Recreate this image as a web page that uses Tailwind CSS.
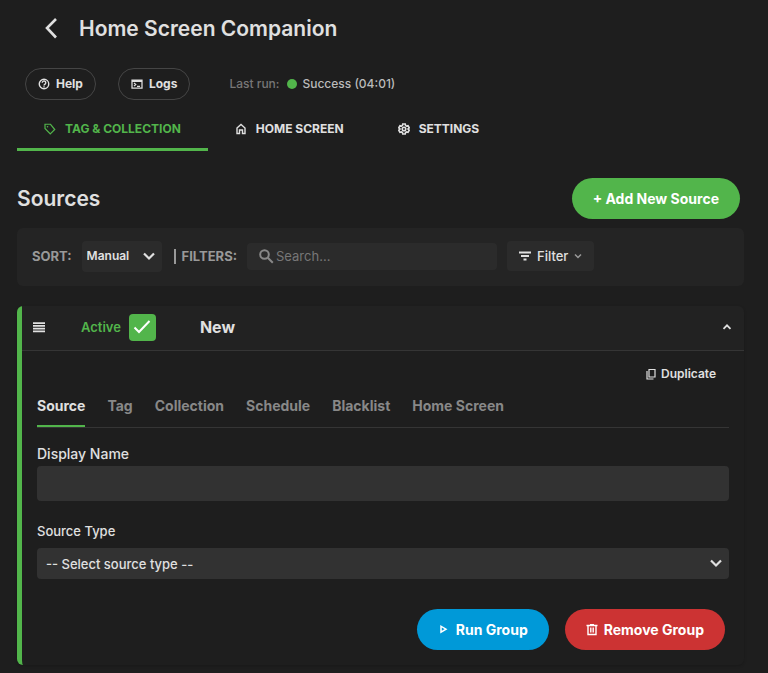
<!DOCTYPE html>
<html lang="en">
<head>
  <meta charset="UTF-8" />
  <meta name="viewport" content="width=device-width, initial-scale=1.0"/>
  <title>Home Screen Companion</title>
  <script src="https://cdn.jsdelivr.net/npm/@tailwindcss/browser@4"></script>
</head>
<body class="bg-[#1e1e1e] text-[#e0e0e0] font-['Inter',sans-serif] text-[13px] leading-5">
  <header class="flex items-center gap-[11px] h-14 pl-9 pt-0.5">
    <button type="button" aria-label="Back" class="size-8 flex items-center justify-center">
      <svg class="size-6" viewBox="0 0 24 24" fill="none" stroke="currentColor" stroke-width="2.6"><path d="M16 2 7 11l9 9.500"/></svg>
    </button>
    <h1 class="text-[21px] leading-8 font-semibold">Home Screen Companion</h1>
  </header>

  <main class="pl-[17px] pr-6">
    <!-- Toolbar -->
    <div class="flex items-center pt-3 pl-2">
      <button type="button" class="flex items-center gap-1.5 h-8 px-3 rounded-full border border-[#454545] text-[12px] font-bold">
        <svg class="size-3" viewBox="0 0 24 24" fill="none" stroke="currentColor" stroke-width="2.800"><circle cx="12" cy="12" r="9.500"/><path d="M8.500 9.500a3.500 3.500 0 1 1 5.500 2.800c-1.300.9-2 1.500-2 2.700"/><path d="M12 16.500v2.500"/></svg>
        Help
      </button>
      <button type="button" class="flex items-center gap-1.5 h-8 px-3 ml-[22px] rounded-full border border-[#454545] text-[12px] font-bold">
        <svg class="size-3" viewBox="0 0 24 24" fill="none" stroke="currentColor" stroke-width="2.500"><path d="M2 4h20v16H2z"/><path d="M2 6h20" stroke-width="4"/><path d="m6 10 3.500 3L6 16M12 16.500h6"/></svg>
        Logs
      </button>
      <p class="flex items-center ml-[39px] text-[12px] font-medium text-[#777]">Last run:
        <span class="size-2.5 rounded-full bg-[#52b54b] ml-2 mr-[5px]"></span>
        <span class="text-[#bbb]">Success (04:01)</span>
      </p>
    </div>

    <nav class="flex mt-[7px] text-[12px] font-bold uppercase">
      <a href="#tags" class="flex items-center gap-[9px] h-11 px-[27px] pt-0.5 border-b-3 border-[#52b54b] text-[#52b54b]">
        <svg class="size-3" viewBox="0 0 24 24" fill="none" stroke="currentColor" stroke-width="2.400"><path d="M2 2.500v8.500l10.500 11 9-9L13 2.500z"/><circle cx="7" cy="7.500" r="1.600" fill="currentColor" stroke="none"/></svg>
        Tag &amp; Collection
      </a>
      <a href="#home" class="flex items-center gap-[9px] h-11 px-[27px] pt-0.5 border-b-3 border-transparent">
        <svg class="size-3" viewBox="0 0 24 24" fill="none" stroke="currentColor" stroke-width="2.800"><path d="M4 10 12 3l8 7v11h-5v-7H9v7H4z"/></svg>
        Home Screen
      </a>
      <a href="#settings" class="flex items-center gap-[9px] h-11 px-[27px] pt-0.5 border-b-3 border-transparent">
        <svg class="size-3" viewBox="0 0 24 24" fill="none" stroke="currentColor" stroke-width="3.200"><path d="M9.500 2h5l.7 3.200 1.800 1 3.100-1 2.400 4.300L20 11.800v.6l2.500 2.100-2.400 4.300-3.100-1-1.800 1-.7 3.200h-5l-.7-3.200-1.800-1-3.100 1-2.400-4.300L4 12.400v-.6L1.500 9.500l2.400-4.300 3.100 1 1.800-1z"/><circle cx="12" cy="12" r="3.500"/></svg>
        Settings
      </a>
    </nav>

    <div class="flex items-center justify-between mt-[27px] pr-1">
      <h2 class="text-[21px] leading-8 font-semibold">Sources</h2>
      <button type="button" class="h-[41px] px-[21px] rounded-full bg-[#52b54b] text-white text-[14px] font-bold">+ Add New Source</button>
    </div>

    <!-- Sort and filters -->
    <div class="flex items-center h-[58px] mt-[9px] pl-[15px] pb-0.5 rounded-md bg-[#242424]">
      <label for="sort" class="font-bold text-[#999]">SORT:</label>
      <div class="relative ml-2.5">
        <select id="sort" class="appearance-none block w-20 h-[31px] pl-[5px] rounded bg-[#2b2b2b] text-[12px] font-semibold">
          <option>Manual</option>
          <option>Name</option>
        </select>
        <svg class="absolute right-1.5 top-2 size-3.5 pointer-events-none" viewBox="0 0 14 14" fill="none" stroke="currentColor" stroke-width="2.200"><path d="m2 4.500 5 5 5-5"/></svg>
      </div>
      <span class="w-0.5 h-[15px] ml-3 bg-[#999]"></span>
      <label for="search" class="ml-1.5 font-bold text-[#999]">FILTERS:</label>
      <div class="relative ml-2.5">
        <svg class="absolute left-3 top-1.5 size-[15px] text-[#888]" viewBox="0 0 15 15" fill="none" stroke="currentColor" stroke-width="2"><circle cx="5.500" cy="5.500" r="4.300"/><path d="m8.800 8.800 5 5"/></svg>
        <input id="search" type="text" placeholder="Search..." class="block w-[250px] h-[27px] pl-[29px] rounded bg-[#2b2b2b] text-[13px] placeholder:text-[#777]">
      </div>
      <button type="button" class="flex items-center gap-1.5 h-[30px] px-3 ml-2.5 rounded bg-[#2b2b2b] text-[13px] font-medium">
        <svg class="size-3" viewBox="0 0 12 12" fill="none" stroke="currentColor" stroke-width="1.800"><path d="M0 2.500h12M2 6h8M4.500 9.500h3"/></svg>
        Filter
        <svg class="size-2 text-[#999]" viewBox="0 0 8 8" fill="none" stroke="currentColor" stroke-width="1.500"><path d="m1 2.500 3 3 3-3"/></svg>
      </button>
    </div>

    <!-- Source group -->
    <section class="mt-5 mb-2 border-l-5 border-[#52b54b] rounded-md shadow-[0_1px_3px_rgba(0,0,0,0.2)]">
      <div class="flex items-center h-[45px] pl-[11px] pr-3 pb-0.5 rounded-tr-md bg-[#222] border-b border-[#353535]">
        <svg class="size-3" viewBox="0 0 12 12" fill="none" stroke="currentColor" stroke-width="1.800"><path d="M0 2.200h12M0 4.900h12M0 7.600h12M0 10.300h12"/></svg>
        <label for="active" class="ml-9 font-semibold text-[#52b54b]">Active</label>
        <div class="relative ml-2">
          <input id="active" type="checkbox" checked class="appearance-none block size-[27px] rounded bg-[#52b54b]">
          <svg class="absolute inset-0 size-[27px] text-white pointer-events-none" viewBox="0 0 27 27" fill="none" stroke="currentColor" stroke-width="2"><path d="m5.500 13.500 4.500 4.500L20.500 7"/></svg>
        </div>
        <h3 class="ml-11 text-[16px] font-bold">New</h3>
        <button type="button" aria-label="Collapse" class="ml-auto">
          <svg class="size-2.5" viewBox="0 0 10 10" fill="none" stroke="currentColor" stroke-width="1.800"><path d="m1.500 6.800 3.500-3.500 3.500 3.500"/></svg>
        </button>
      </div>

      <div class="px-[15px] pt-[13px] pb-[15px]">
        <div class="flex justify-end pr-[13px]">
          <button type="button" class="flex items-center gap-1 text-[12px] font-semibold">
            <svg class="size-3" viewBox="0 0 12 12" fill="none" stroke="currentColor" stroke-width="1.200"><path d="M4 1.500h6v7.500H4zM2 3v8h6.500"/></svg>
            Duplicate
          </button>
        </div>

        <nav class="flex gap-[22px] mt-[9px] border-b border-[#353535] text-[14px] font-bold text-[#888]">
          <a href="#source" class="h-[34px] pt-[3px] border-b-2 border-[#52b54b] text-[#e0e0e0]">Source</a>
          <a href="#tag" class="pt-[3px]">Tag</a>
          <a href="#collection" class="pt-[3px]">Collection</a>
          <a href="#schedule" class="pt-[3px]">Schedule</a>
          <a href="#blacklist" class="pt-[3px]">Blacklist</a>
          <a href="#home-screen" class="pt-[3px]">Home Screen</a>
        </nav>

        <label for="name" class="block mt-4 text-[14px] font-medium">Display Name</label>
        <input id="name" type="text" class="block w-full h-[35px] mt-0.5 px-2 rounded bg-[#323232] text-[14px]">

        <label for="type" class="block mt-5 text-[13px] font-medium">Source Type</label>
        <div class="relative mt-[7px]">
          <select id="type" class="appearance-none block w-full h-[31px] pl-[9px] rounded bg-[#323232] text-[13px] font-medium">
            <option>-- Select source type --</option>
          </select>
          <svg class="absolute right-1.5 top-2 size-3.5 pointer-events-none" viewBox="0 0 14 14" fill="none" stroke="currentColor" stroke-width="2.200"><path d="m2 4.500 5 5 5-5"/></svg>
        </div>

        <div class="flex justify-end gap-4 mt-[30px] pr-1 text-[14px] font-bold text-white">
          <button type="button" class="flex items-center gap-1.5 h-[41px] px-[21px] rounded-full bg-[#0099d8]">
            <svg class="size-3" viewBox="0 0 12 12" fill="none" stroke="currentColor" stroke-width="1.500"><path d="M3 2.200v6l5-3z"/></svg>
            Run Group
          </button>
          <button type="button" class="flex items-center gap-1.5 h-[41px] px-[21px] rounded-full bg-[#cc3333]">
            <svg class="size-3" viewBox="0 0 12 12" fill="none" stroke="currentColor" stroke-width="1.400"><path d="M.5 1.500h11M4 .7h4M2 1.500v9h8v-9M4.800 3.500v5M7.200 3.500v5"/></svg>
            Remove Group
          </button>
        </div>
      </div>
    </section>
  </main>
</body>
</html>
